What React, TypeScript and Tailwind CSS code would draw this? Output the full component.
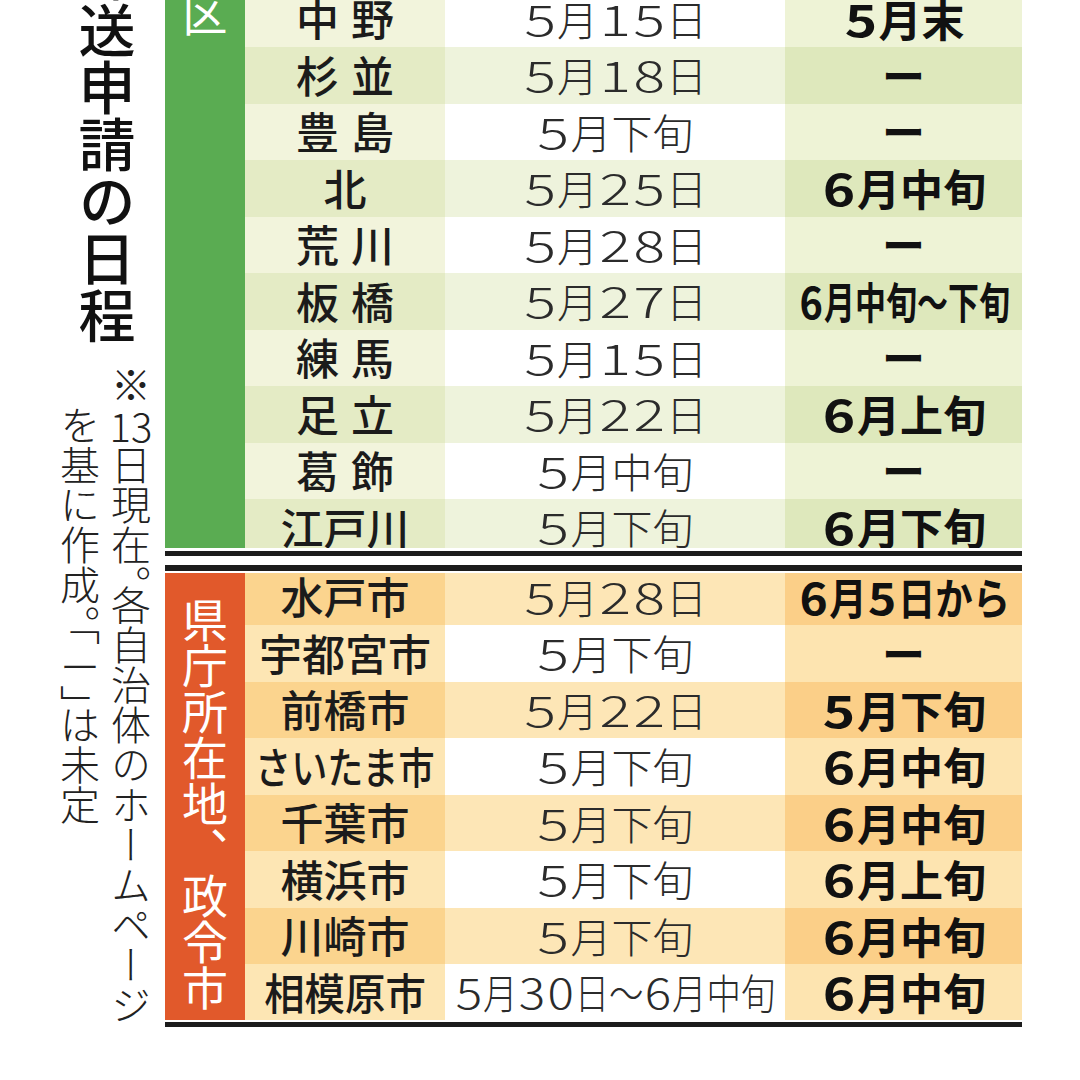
import React from "react";

type Row = {
  name: string;
  date: string;
  start: string;
  nameFit?: string;
  dateFit?: string;
  startFit?: string;
};

const wards: Row[] = [
  { name: "中野", date: "5月15日", start: "5月末" },
  { name: "杉並", date: "5月18日", start: "ー" },
  { name: "豊島", date: "5月下旬", start: "ー" },
  { name: "北", date: "5月25日", start: "6月中旬" },
  { name: "荒川", date: "5月28日", start: "ー" },
  { name: "板橋", date: "5月27日", start: "6月中旬〜下旬", startFit: "scale-x-[0.72]" },
  { name: "練馬", date: "5月15日", start: "ー" },
  { name: "足立", date: "5月22日", start: "6月上旬" },
  { name: "葛飾", date: "5月中旬", start: "ー" },
  { name: "江戸川", date: "5月下旬", start: "6月下旬" },
];

const cities: Row[] = [
  { name: "水戸市", date: "5月28日", start: "6月5日から", startFit: "scale-x-[0.87]" },
  { name: "宇都宮市", date: "5月下旬", start: "ー" },
  { name: "前橋市", date: "5月22日", start: "5月下旬" },
  { name: "さいたま市", date: "5月下旬", start: "6月中旬", nameFit: "scale-x-[0.84]" },
  { name: "千葉市", date: "5月下旬", start: "6月中旬" },
  { name: "横浜市", date: "5月下旬", start: "6月上旬" },
  { name: "川崎市", date: "5月下旬", start: "6月中旬" },
  { name: "相模原市", date: "5月30日〜6月中旬", start: "6月中旬", nameFit: "scale-x-[0.94]", dateFit: "scale-x-[0.84]" },
];

// stripe colours, [odd, even]
const greenTone = {
  name: ["bg-[#f2f4dc]", "bg-[#e4ebc5]"],
  date: ["bg-[#ffffff]", "bg-[#eef3dc]"],
  start: ["bg-[#eef3d6]", "bg-[#dee8bc]"],
};
const orangeTone = {
  name: ["bg-[#fbd48e]", "bg-[#fde6b4]"],
  date: ["bg-[#fde6b6]", "bg-[#ffffff]"],
  start: ["bg-[#fbcf88]", "bg-[#fde4b0]"],
};

// newspaper digits are wide, so each one gets its own box and a stretched glyph
function Digits({ text, box, glyph }: { text: string; box: string; glyph: string }) {
  return (
    <>
      {Array.from(text).map((ch, i) =>
        /\d/.test(ch) ? (
          <span key={i} className={`inline-block text-center ${box}`}>
            <span className={`inline-block ${glyph}`}>{ch}</span>
          </span>
        ) : (
          <React.Fragment key={i}>{ch}</React.Fragment>
        )
      )}
    </>
  );
}

function TableRow({ row, idx, tone }: { row: Row; idx: number; tone: typeof greenTone }) {
  const k = idx % 2;
  const spaced = row.name.length === 2;
  return (
    <div className="flex h-[56.5px] shrink-0">
      <div className={`flex w-[200px] items-center justify-center pb-[2px] ${tone.name[k]}`}>
        <span
          className={`inline-block whitespace-nowrap text-[43px] font-medium leading-none text-[#1b1b1b] ${
            spaced ? "pl-[12px] tracking-[12px]" : ""
          } ${row.nameFit ?? ""}`}
        >
          {row.name}
        </span>
      </div>
      <div className={`flex w-[340px] items-center justify-center pb-[2px] ${tone.date[k]}`}>
        <span
          className={`inline-block whitespace-nowrap text-[41px] font-light leading-none text-[#2b2b2b] ${
            row.dateFit ?? ""
          }`}
        >
          <Digits text={row.date} box="w-[34px] leading-none" glyph="text-[42px] leading-none scale-x-[1.4]" />
        </span>
      </div>
      <div className={`flex w-[237px] items-center justify-center pb-[2px] ${tone.start[k]}`}>
        <span
          className={`inline-block whitespace-nowrap text-[43px] font-bold leading-none text-[#111] ${
            row.startFit ?? ""
          }`}
        >
          <Digits text={row.start} box="w-[36px] leading-none" glyph="text-[44px] leading-none scale-x-[1.25]" />
        </span>
      </div>
    </div>
  );
}

export default function App() {
  return (
    <div className="flex h-[1080px] w-[1080px] overflow-hidden bg-white font-['Noto_Sans_CJK_JP',sans-serif]">
      <aside className="w-[165px] shrink-0">
        <h1 className="ml-[78px] mt-[-55px] h-[399px] w-[57px] text-[57px] font-medium leading-none text-[#111] [writing-mode:vertical-rl]">
          郵送申請の日程
        </h1>
        <p className="ml-[54px] mt-[21px] h-[665px] w-[102px] pt-[40px] text-[40px] font-light leading-[51px] text-[#222] [font-feature-settings:'vhal'] [text-indent:-40px] [writing-mode:vertical-rl]">
          ※<span className="[text-combine-upright:all]">13</span>日現在。各自治体のホームページを基に作成。「
          <span className="[text-combine-upright:all]">ー</span>」は未定
        </p>
      </aside>

      <main className="mt-[-9.5px] w-[857px] shrink-0">
        <section className="flex h-[557.5px] overflow-hidden">
          <div className="flex w-[80px] shrink-0 justify-center bg-[#5aac52]">
            <div className="mt-[-133.5px] h-[180px] text-[45px] leading-none text-white [writing-mode:vertical-rl]">
              東京<span className="[text-combine-upright:all]">23</span>区
            </div>
          </div>
          <div className="flex flex-col">
            {wards.map((row, i) => (
              <TableRow key={row.name} row={row} idx={i} tone={greenTone} />
            ))}
          </div>
        </section>

        <div className="mt-[3px] h-[5px] bg-[#1c1c1c]" />
        <div className="mt-[9px] h-[6px] bg-[#1c1c1c]" />

        <section className="mt-[2px] flex h-[446.5px] overflow-hidden">
          <div className="flex w-[80px] shrink-0 justify-center bg-[#e1592b] pt-[24px]">
            <div className="h-[414px] text-[46px] leading-none text-white [writing-mode:vertical-rl]">
              県庁所在地、政令市
            </div>
          </div>
          <div className="mt-[-4.5px] flex flex-col">
            {cities.map((row, i) => (
              <TableRow key={row.name} row={row} idx={i} tone={orangeTone} />
            ))}
          </div>
        </section>

        <div className="mt-[2.5px] h-[5px] bg-[#1c1c1c]" />
      </main>
    </div>
  );
}
